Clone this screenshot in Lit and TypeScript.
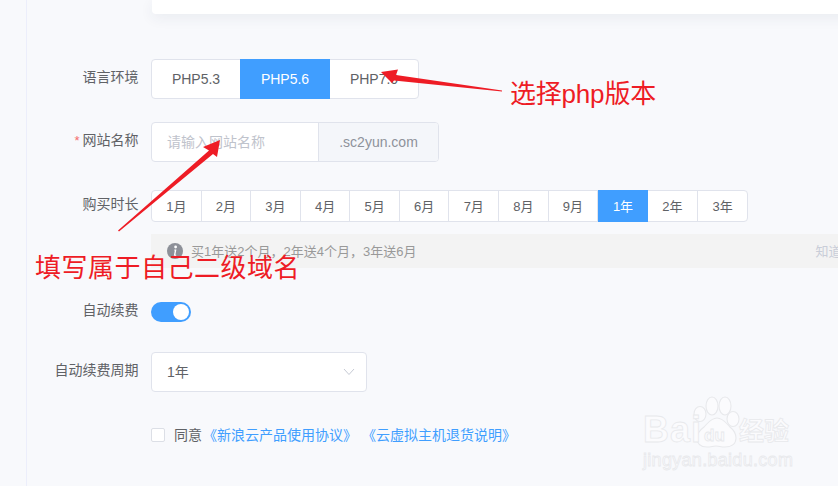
import { LitElement, html, css } from "lit";
import { customElement } from "lit/decorators.js";

const months = ["1月","2月","3月","4月","5月","6月","7月","8月","9月","1年","2年","3年"];

@customElement("app-root")
export class AppRoot extends LitElement {
  static styles = css`
    :host { display: block; width: 838px; height: 486px; overflow: hidden; position: relative; background: #f8f9fc;
      font-family: "Liberation Sans", "Noto Sans CJK SC", sans-serif; color: #606266; font-size: 14px; }
    .page { display: flex; height: 486px; }
    .side { width: 26px; flex: none; border-right: 1px solid #eceefb; }
    .main { flex: 1; min-width: 0; overflow: hidden; }
    .card { margin-left: 125px; width: 760px; height: 14px; background: #fff; border-radius: 0 0 4px 4px; box-shadow: 0 4px 14px rgba(40,50,90,.07); }
    .row { display: flex; align-items: center; }
    .label { width: 112px; flex: none; text-align: right; margin-right: 12px; white-space: nowrap; line-height: 20px; position: relative; top: -2px; left: -.5px; }
    .req { color: #f56c6c; margin-right: 3px; font-size: 13px; }
    .r1 { margin-top: 45px; }
    .r2 { margin-top: 23px; }
    .r3 { margin-top: 28px; }
    .r5 { margin-top: 34px; }
    .r6 { margin-top: 30px; }
    .r7 { margin-top: 33px; }
    .seg { display: flex; height: 40px; width: 268px; box-sizing: border-box; border: 1px solid #e0e3ec; border-radius: 4px; background: #fff; }
    .seg div { flex: 0 0 88px; display: flex; align-items: center; justify-content: center; font-size: 14px; }
    .seg .on, .months .on { background: #409eff; color: #fff; }
    .seg .on { flex: 0 0 90px; margin: -1px 0; }
    .inputs { display: flex; height: 40px; width: 288px; box-sizing: border-box; border: 1px solid #e0e3ec; border-radius: 4px; background: #fff; }
    .ph { width: 151px; padding: 0 0 2px 15px; font-size: 14px; color: #bfc3cc; display: flex; align-items: center; flex: none; border-right: 1px solid #e0e3ec; }
    .suffix { flex: 1; background: #f4f6fa; display: flex; align-items: center; justify-content: center; color: #8e929b; font-size: 14px; border-radius: 0 3px 3px 0; }
    .months { display: flex; height: 32px; width: 597px; box-sizing: border-box; border: 1px solid #e0e3ec; border-radius: 4px; background: #fff; }
    .months div { flex: 0 0 49.58px; box-sizing: border-box; display: flex; align-items: center; justify-content: center; font-size: 13px; padding-bottom: 2px; border-right: 1px solid #e0e3ec; }
    .months div:last-child { border-right: none; flex: 1 1 0; }
    .months .on { border-right: none; margin: -1px 0; }
    .months .on + div { flex-basis: 50.4px; }
    .tip { margin: 12px 0 0 124px; height: 34px; width: 720px; background: #f3f3f3; display: flex; align-items: center; padding-left: 16px; box-sizing: border-box; font-size: 13px; color: #999; }
    .tip svg { margin-right: 8px; flex: none; }
    .tip span { position: relative; top: -1px; }
    .tip .know { margin-left: 399px; color: #c9cdd8; white-space: nowrap; }
    .switch { width: 40px; height: 20px; border-radius: 10px; background: #409eff; position: relative; }
    .knob { position: absolute; right: 2px; top: 2px; width: 16px; height: 16px; background: #fff; border-radius: 50%; }
    .select { width: 216px; height: 40px; box-sizing: border-box; border: 1px solid #e0e3ec; border-radius: 4px; background: #fff; display: flex; align-items: center; justify-content: space-between; padding: 0 11px 0 15px; font-size: 14px; }
    .select span { position: relative; top: -1px; }
    .agree { margin-left: 124px; font-size: 14px; display: flex; align-items: center; white-space: nowrap; }
    .agree span { position: relative; top: -1px; }
    .box { width: 14px; height: 14px; box-sizing: border-box; border: 1px solid #dcdfe6; border-radius: 2px; background: #fff; margin-right: 9px; flex: none; }
    .link { color: #409eff; }
    .sp1 { display: inline-block; width: 1px; }
    .sp2 { display: inline-block; width: 5px; }
    .overlay { position: absolute; inset: 0; pointer-events: none; }
    .note { position: absolute; color: #ee1c25; font-size: 26px; line-height: 32px; white-space: nowrap; font-weight: 400; }
    .n1 { left: 510px; top: 78px; letter-spacing: -.2px; }
    .n2 { left: 35px; top: 252px; letter-spacing: .5px; }
    .wm { position: absolute; white-space: nowrap; color: #fbfbfd; -webkit-text-stroke: .8px #e8e9ec; }
    .w1 { left: 643px; top: 410px; font-size: 36px; font-weight: 700; line-height: 40px; letter-spacing: 1px; }
    .w2 { left: 739px; top: 414px; font-size: 25px; line-height: 34px; font-weight: 700; }
    .w3 { left: 643px; top: 448px; font-size: 18px; line-height: 24px; letter-spacing: .3px; }
    .w4 { left: 704px; top: 425px; font-size: 17px; line-height: 22px; font-weight: 700; }
    .paw { position: absolute; left: 690px; top: 394px; }
  `;

  render() {
    return html`
      <div class="page">
        <div class="side"></div>
        <div class="main">
          <div class="card"></div>
          <div class="row r1">
            <div class="label">语言环境</div>
            <div class="seg"><div>PHP5.3</div><div class="on">PHP5.6</div><div>PHP7.0</div></div>
          </div>
          <div class="row r2">
            <div class="label"><span class="req">*</span>网站名称</div>
            <div class="inputs"><div class="ph">请输入网站名称</div><div class="suffix">.sc2yun.com</div></div>
          </div>
          <div class="row r3">
            <div class="label">购买时长</div>
            <div class="months">${months.map((m) => html`<div class=${m === "1年" ? "on" : ""}>${m}</div>`)}</div>
          </div>
          <div class="tip">
            <svg width="16" height="16" viewBox="0 0 16 16"><circle cx="8" cy="8" r="8" fill="#8d9098"/><circle cx="8.6" cy="4" r="1.4" fill="#fff"/><path d="M7.4 6.6h2l-1 5.2h.9l-.2 1H6.8l1-5.2h-.6z" fill="#fff"/></svg>
            <span>买1年送2个月，2年送4个月，3年送6月</span>
            <span class="know">知道了</span>
          </div>
          <div class="row r5">
            <div class="label">自动续费</div>
            <div class="switch"><div class="knob"></div></div>
          </div>
          <div class="row r6">
            <div class="label">自动续费周期</div>
            <div class="select"><span>1年</span>
              <svg width="12" height="8" viewBox="0 0 12 8"><path d="M1 1l5 5.5L11 1" fill="none" stroke="#c6cad4" stroke-width="1"/></svg>
            </div>
          </div>
          <div class="row r7 agree">
            <div class="box"></div><span>同意</span><span class="sp1"></span><span class="link">《新浪云产品使用协议》</span><span class="sp2"></span><span class="link">《云虚拟主机退货说明》</span>
          </div>
        </div>
      </div>
      <div class="overlay">
        <svg class="paw" width="70" height="70" viewBox="0 0 70 70">
          <g fill="#fbfbfd" stroke="#e8e9ec" stroke-width="1.1">
            <ellipse cx="10" cy="20" rx="6" ry="7.5"/>
            <ellipse cx="22" cy="12" rx="6" ry="9"/>
            <ellipse cx="35" cy="12" rx="6" ry="9"/>
            <ellipse cx="43" cy="25" rx="6" ry="7.5"/>
            <path d="M27 24c6 0 9 5 13 9 5 4 6 7 6 11 0 7-6 9-11 9-4 0-6-1-9-1s-5 1-9 1c-6 0-10-3-10-9 0-5 3-8 7-11 4-4 7-9 13-9z"/>
          </g>
        </svg>
        <span class="wm w1">Bai</span>
        <span class="wm w4">du</span>
        <span class="wm w2">经验</span>
        <span class="wm w3">jingyan.baidu.com</span>
        <svg width="838" height="486" viewBox="0 0 838 486" style="position:absolute;left:0;top:0">
          <path d="M381 72L398 69.5L396 75L502 90.5L502 91.5L394 80.5L392 83z" fill="#ee1c25"/>
          <path d="M220 140L203 147L209 150.5L118 230.5L119 231.5L213 154L217 157z" fill="#ee1c25"/>
        </svg>
        <span class="note n1">选择php版本</span>
        <span class="note n2">填写属于自己二级域名</span>
      </div>
    `;
  }
}
